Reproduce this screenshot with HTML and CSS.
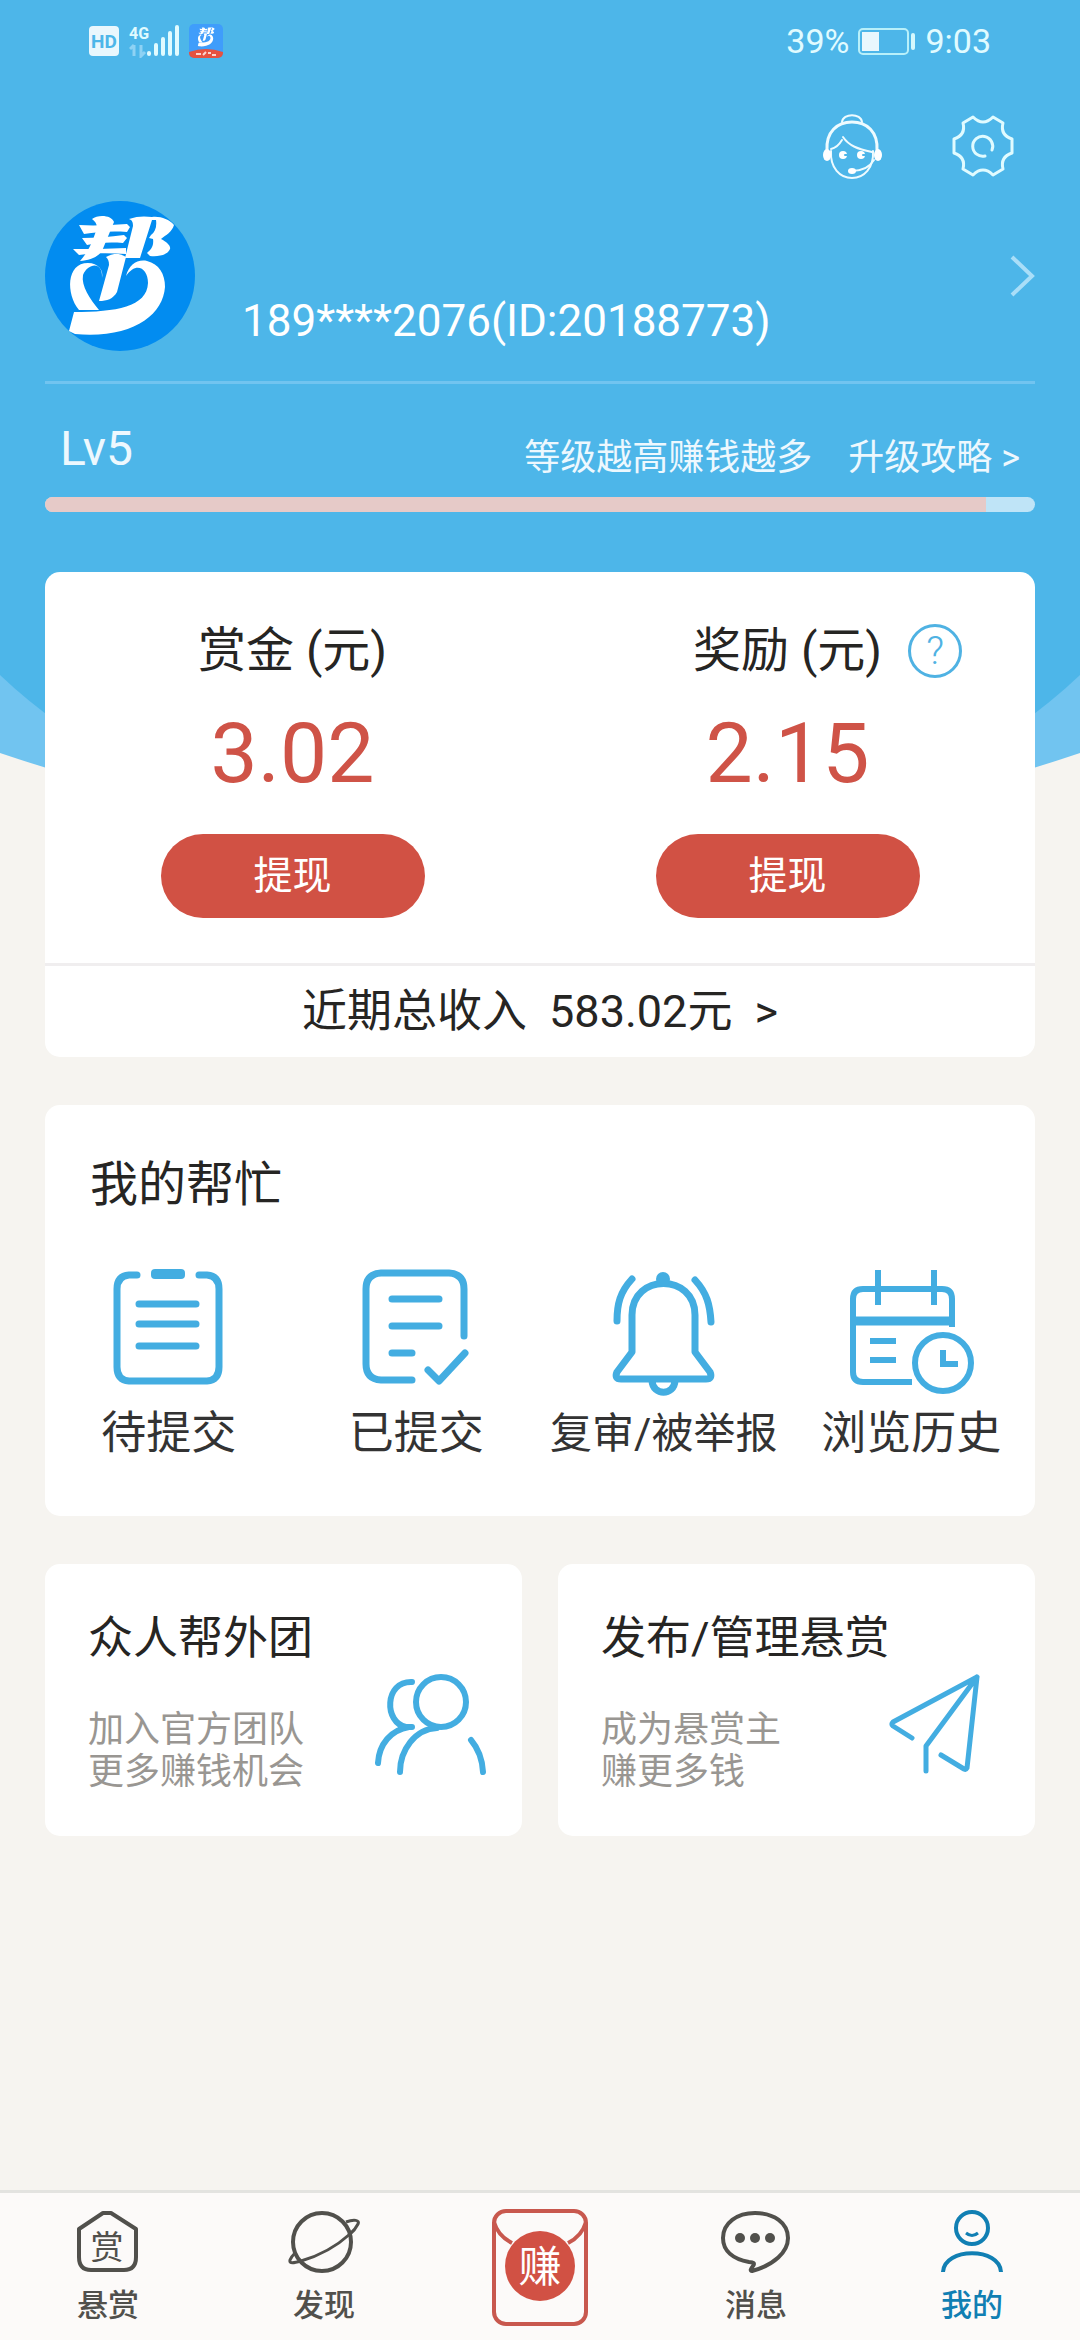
FILE: index.html
```html
<!DOCTYPE html>
<html lang="zh-CN">
<head>
<meta charset="utf-8">
<meta name="viewport" content="width=device-width, initial-scale=1">
<title>我的</title>
<link rel="stylesheet" href="styles.css">
</head>
<body>
<svg class="defs" aria-hidden="true">
  <symbol id="brand-mark" viewBox="0 0 150 150">
    <path d="M34 24c16 1 32 0 48-1l3 3-3 5c-16-1-30 0-43 2zM37 37c14 0 28-1 42-3l3 3-4 5c-15-1-26 0-36 2zM28 48c17 0 35 0 53-1v6c-17-1-33-1-47 1z"/>
    <path d="M47 18c6-5 20-4 22 3L57 50c-5 7-13 9-22 10 8-9 12-18 16-30 2-6 0-9-4-12z"/>
    <path d="M84 18c8-3 16-3 23-2 8-1 17 2 22 8-2 7-8 10-13 14 6 3 10 7 9 10-2 5-9 8-20 7l-3-3c4-3 7-7 6-14l-4-1 2-3c4-3 6-8 5-15h-4L95 57H80l8-32c0-4-1-6-4-7z"/>
    <path d="M61 56c7-4 14-4 20 0L72 91c-4 7-10 9-18 9l10-36c0-4-1-6-3-8z"/>
    <path d="M57 77c1-17-14-15-19-3-2 11 7 24 16 35H34C21 93 21 62 43 62c10 0 16 7 14 15z"/>
    <path d="M81 75c3-11 11-17 21-15 12 3 18 13 18 26-2 29-34 52-90 47l-6-3 5-19c42 0 73-5 74-29 0-15-12-22-22-7z"/>
  </symbol>
</svg>

<div class="page">
  <div class="backdrop" aria-hidden="true">
    <svg viewBox="0 0 1080 840" preserveAspectRatio="none">
      <path fill="#71c4f0" d="M0 0H1080V753Q540 935 0 753Z"/>
      <path fill="#4db6e9" d="M0 0H1080V675C960 790 800 830 540 830S120 790 0 675Z"/>
    </svg>
  </div>

  <header class="status">
    <div class="status-group">
      <svg class="hd" viewBox="0 0 30 30" role="img" aria-label="HD"><rect width="30" height="30" rx="4" fill="#e9f7fd"/><text x="15" y="22" text-anchor="middle" class="hd-text">HD</text></svg>
      <svg class="signal" viewBox="0 0 50 34" role="img" aria-label="4G">
        <text x="0" y="15" class="net-text">4G</text>
        <path d="M5 21v11M1 25l4-4M12 21v11l4-4" stroke="#8ed2f4" stroke-width="3" fill="none"/>
        <path d="M20 29v1M27 21v9M34 15v15M41 9v21M48 3v27" stroke="#e0fbff" stroke-width="4" stroke-linecap="round"/>
      </svg>
      <svg class="app" viewBox="0 0 34 34" aria-hidden="true">
        <rect width="34" height="34" rx="5" fill="#3f9dfb"/>
        <use href="#brand-mark" x="5" y="1" width="24" height="24" fill="#fff"/>
        <path d="M0 28q17-6 34 0v1a5 5 0 0 1-5 5H5a5 5 0 0 1-5-5z" fill="#e65240"/>
        <path d="M7 30h5M14 31l3-3M19 29h3M23 31h4" stroke="#fbd5cf" stroke-width="2"/>
      </svg>
    </div>
    <div class="status-group status-right">
      <span>39%</span>
      <svg class="battery" viewBox="0 0 58 27" role="img" aria-label="电量"><rect x="1" y="1" width="49" height="25" rx="4" fill="none" stroke="#b8f0fa" stroke-width="2"/><rect x="4" y="4" width="17" height="19" fill="#e9f7fd"/><rect x="53" y="5" width="4" height="17" rx="2" fill="#d5f8fd"/></svg>
      <span>9:03</span>
    </div>
  </header>

  <div class="actions">
    <button type="button" aria-label="客服">
      <svg class="agent" viewBox="0 0 60 66" fill="none" stroke="#eefbff" stroke-width="2" stroke-linecap="round">
        <path d="M20 9C21 0 39 0 40 9"/>
        <path d="M5 37C4 19 15 9 30 9s26 10 25 28" stroke-width="3"/>
        <path d="M9 38C8 55 18 65 30 65s22-10 21-27"/>
        <path d="M9 36c5-1 8-4 11-9M21 24c6 9 15 12 29 15M30 58c10 0 17-3 22-11"/>
        <g fill="#fff" stroke="none"><ellipse cx="5" cy="42" rx="4" ry="6"/><ellipse cx="56" cy="42" rx="4" ry="6"/><circle cx="21" cy="42" r="4"/><circle cx="39" cy="42" r="4"/><ellipse cx="30" cy="58" rx="4" ry="3"/></g>
        <path d="M23 42h3M41 42h3" stroke="#4db6e9"/>
      </svg>
    </button>
    <button type="button" aria-label="设置">
      <svg class="gear" viewBox="0 0 66 66" fill="none" stroke="#e0fbff" stroke-width="3" stroke-linejoin="round" stroke-linecap="round">
        <path d="M23 4Q33 14 43 4L53 10Q50 22 62 26V40Q50 44 53 56L43 62Q33 52 23 62L13 56Q16 44 4 40V26Q16 22 13 10Z"/>
        <path d="M42 37A10 10 0 1 0 35 43"/>
      </svg>
    </button>
  </div>

  <a class="profile" href="#profile">
    <svg class="avatar" viewBox="0 0 150 150" role="img" aria-label="头像"><circle cx="75" cy="75" r="75" fill="#028cf0"/><use href="#brand-mark" width="150" height="150" fill="#fff"/></svg>
    <span class="account">189****2076(ID:20188773)</span>
    <svg class="chevron" viewBox="0 0 26 42" fill="none" stroke="#a9def8" stroke-width="4"><path d="M3 2l20 19L3 40"/></svg>
  </a>

  <section class="level">
    <div class="level-row">
      <span class="level-name">Lv5</span>
      <span class="level-note">等级越高赚钱越多</span>
      <a class="level-link" href="#upgrade">升级攻略 &gt;</a>
    </div>
    <div class="meter" role="progressbar" aria-label="等级进度" aria-valuenow="95" aria-valuemin="0" aria-valuemax="100"><div class="meter-fill" style="width:95%"></div></div>
  </section>

  <main>
    <section class="card earnings">
      <div class="balances">
        <div class="balance">
          <div class="balance-label"><span class="balance-name">赏金 (元)</span></div>
          <div class="amount">3.02</div>
          <button type="button" class="withdraw">提现</button>
        </div>
        <div class="balance">
          <div class="balance-label"><span class="balance-name">奖励 (元)</span>
            <button type="button" class="help" aria-label="说明">?</button></div>
          <div class="amount">2.15</div>
          <button type="button" class="withdraw">提现</button>
        </div>
      </div>
      <a class="total" href="#income"><span>近期总收入</span><span>583.02元</span><span>&gt;</span></a>
    </section>

    <section class="card tasks">
      <h2>我的帮忙</h2>
      <div class="task-grid">
        <a href="#pending">
          <svg viewBox="0 0 138 138"><path d="M37 9H29Q17 10 17 23V101Q17 114 29 115H107Q119 114 119 101V23Q119 10 107 9H99"/><path d="M39 38H96M39 58H96M39 80H96"/><rect x="51" y="3" width="34" height="10" rx="4" fill="#43ade1" stroke="none"/></svg>
          <span>待提交</span></a>
        <a href="#submitted">
          <svg viewBox="0 0 138 138"><path d="M65 114H34Q19 113 19 98V23Q19 8 34 7H102Q117 8 117 23V70M45 33H92M45 60H92M45 87H65M81 104L92 115L118 87"/></svg>
          <span>已提交</span></a>
        <a href="#review">
          <svg viewBox="0 0 138 138"><path d="M37 49C37 7 100 7 100 49V86L115 106Q118 113 111 113H26Q19 113 22 106L37 86ZM57 115C58 130 79 130 80 115M37 13C25 26 22 38 22 55M100 14C112 27 115 39 116 56"/><circle cx="68" cy="13" r="7" fill="#43ade1" stroke="none"/></svg>
          <span class="compact">复审/被举报</span></a>
        <a href="#history">
          <svg viewBox="0 0 138 138" class="square"><path d="M70 116H21Q11 116 11 106V33Q11 23 21 23H100Q110 23 110 33V61M36 4V39M92 4V39M28 75H54M28 94H54M101 84V98H116"/><path d="M11 55H110" stroke-width="9"/><circle cx="101" cy="97" r="28"/></svg>
          <span>浏览历史</span></a>
      </div>
    </section>

    <div class="pair">
      <a class="card promo" href="#team">
        <h2>众人帮外团</h2>
        <div class="promo-body">
          <p>加入官方团队<br>更多赚钱机会</p>
          <svg viewBox="0 0 114 114"><circle cx="68" cy="33" r="25"/><path d="M39 13C11 12 11 54 33 58H39H36C18 61 6 75 5 94M64 59C42 60 27 81 27 103M98 71Q109 84 110 103"/></svg>
        </div>
      </a>
      <a class="card promo" href="#publish">
        <h2>发布/管理悬赏</h2>
        <div class="promo-body">
          <p>成为悬赏主<br>赚更多钱</p>
          <svg viewBox="0 0 114 114" class="thin"><path d="M26 69L7 57Q5 55 7 53L91 8L81 99Q80 101 78 100L55 86M91 8L40 77V102"/></svg>
        </div>
      </a>
    </div>
  </main>

  <nav class="tabs">
    <a href="#bounty">
      <svg viewBox="0 0 72 66"><path d="M31 5H39L64 21V49Q64 62 52 62H19Q7 62 7 49V21Z" stroke-width="4"/><text x="35" y="51" text-anchor="middle" class="house-text">赏</text></svg>
      <span>悬赏</span></a>
    <a href="#discover">
      <svg viewBox="0 0 72 66"><circle cx="34" cy="34" r="29" stroke-width="4"/><path d="M58 14C66 11 72 12 70 16Q67 22 62 26Q41 45 13 53C6 55 1 56 2 52Q3 49 7 45" stroke-width="3"/></svg>
      <span>发现</span></a>
    <a href="#earn" class="earn" aria-label="赚">
      <svg viewBox="0 0 102 120"><rect x="5" y="3" width="92" height="113" rx="12" stroke-width="4"/><path d="M5 14Q9 28 23 35M97 14Q93 28 79 35" stroke-width="4"/><circle cx="51" cy="58" r="35" fill="#d15144" stroke="none"/><text x="51" y="74" text-anchor="middle" class="earn-text">赚</text></svg></a>
    <a href="#messages">
      <svg viewBox="0 0 72 66"><path d="M35 5C54 5 68 15 68 30C68 44 54 57 32 63Q29 63 33 58Q36 54 29 54C13 51 3 43 3 30C3 15 17 5 35 5Z" stroke-width="4"/><g fill="currentColor" stroke="none"><circle cx="20" cy="30" r="5"/><circle cx="35" cy="30" r="5"/><circle cx="50" cy="30" r="5"/></g></svg>
      <span>消息</span></a>
    <a href="#me" class="active" aria-current="page">
      <svg viewBox="0 0 72 66"><circle cx="36" cy="20" r="16" stroke-width="4"/><path d="M30 25Q36 30 42 25" stroke-width="3"/><path d="M7 64C8 39 64 39 65 64" stroke-width="4"/></svg>
      <span>我的</span></a>
  </nav>
</div>
</body>
</html>
```

FILE: styles.css
```css
* { box-sizing: border-box; }
body, h2, p { margin: 0; }
body {
  background: #f6f4f0;
  color: #262523;
  font-family: Roboto, "Noto Sans CJK SC", sans-serif;
  font-size: 45px;
  line-height: 60px;
}
a { color: inherit; text-decoration: none; }
h2 { font-size: 45px; font-weight: 400; }
button {
  border: 0;
  padding: 0;
  background: none;
  color: inherit;
  font: inherit;
  cursor: pointer;
}
svg { display: block; flex: none; }
.defs { position: absolute; width: 0; height: 0; }

.page {
  position: relative;
  display: flex;
  flex-direction: column;
  min-height: 100vh;
}
.backdrop {
  position: absolute;
  inset: 0 0 auto;
  z-index: -1;
}
.backdrop svg { width: 100%; height: 840px; }

.status {
  display: flex;
  justify-content: space-between;
  align-items: center;
  height: 82px;
  padding: 0 89px;
}
.status-group { display: flex; align-items: center; gap: 10px; }
.status-right { gap: 9px; color: #e0fbff; font-size: 34px; }
.hd { width: 30px; height: 30px; }
.hd-text { font: 700 19px Roboto, sans-serif; fill: #4db6e9; }
.signal { width: 50px; height: 34px; }
.net-text { font: 700 16px Roboto, sans-serif; fill: #e0fbff; }
.app { width: 34px; height: 34px; }
.battery { width: 58px; height: 27px; }

.actions {
  display: flex;
  justify-content: flex-end;
  gap: 68px;
  padding: 31px 64px 22px;
}
.agent { width: 60px; height: 66px; }
.gear { width: 66px; height: 66px; }

.profile {
  display: flex;
  align-items: center;
  margin: 0 45px;
  padding-bottom: 30px;
  border-bottom: 3px solid #71c4f0;
  color: #fff;
}
.avatar { width: 150px; height: 150px; }
.account { flex: 1; align-self: flex-end; padding-left: 47px; font-size: 44px; }
.chevron { width: 26px; height: 42px; }

.level { margin: 0 45px; color: #edf8fe; }
.level-row {
  display: flex;
  align-items: flex-end;
  padding: 35px 15px 9px;
}
.level-name { flex: 1; padding-bottom: 9px; font-size: 48px; }
.level-note, .level-link { font-size: 36px; }
.level-link { margin-left: 36px; }
.meter {
  height: 15px;
  border-radius: 8px;
  background: #bfe4f7;
  overflow: hidden;
}
.meter-fill { height: 100%; background: #e6cac8; }

main {
  display: flex;
  flex-direction: column;
  gap: 48px;
  flex: 1;
  padding: 60px 45px 48px;
}
.card { border-radius: 15px; background: #fff; }

.balances {
  display: grid;
  grid-template-columns: 1fr 1fr;
  padding: 49px 0 45px;
  border-bottom: 3px solid #f0eeef;
}
.balance { display: flex; flex-direction: column; align-items: center; }
.balance-label {
  display: grid;
  grid-template-columns: 1fr auto 1fr;
  align-items: center;
  align-self: stretch;
}
.balance-name { grid-column: 2; font-size: 48px; }
.help {
  width: 54px;
  height: 54px;
  margin-left: 26px;
  border: 3px solid #4fb2e3;
  border-radius: 50%;
  color: #4fb2e3;
  font-size: 39px;
  font-weight: 300;
  line-height: 48px;
}
.amount {
  margin-top: 25px;
  color: #cf5347;
  font-size: 84px;
  line-height: 96px;
}
.withdraw {
  width: 264px;
  height: 84px;
  margin-top: 32px;
  border-radius: 42px;
  background: #d15144;
  color: #fff;
  font-size: 39px;
}
.total {
  display: flex;
  justify-content: center;
  align-items: center;
  gap: 22px;
  height: 91px;
}

.tasks { padding: 50px 0 52px; }
.tasks h2 { padding: 0 45px; font-size: 48px; }
.task-grid {
  display: grid;
  grid-template-columns: repeat(4, 1fr);
  padding-top: 51px;
}
.task-grid a {
  display: flex;
  flex-direction: column;
  align-items: center;
  color: #333;
  white-space: nowrap;
}
.task-grid svg {
  width: 138px;
  height: 138px;
  fill: none;
  stroke: #43ade1;
  stroke-width: 7;
  stroke-linecap: round;
  stroke-linejoin: round;
}
.task-grid .square { stroke-width: 6; stroke-linecap: butt; stroke-linejoin: miter; }
.compact { font-size: 42px; }

.pair { display: grid; grid-template-columns: 1fr 1fr; gap: 36px; }
.promo { padding: 45px 35px 43px 43px; }
.promo-body {
  display: flex;
  justify-content: space-between;
  height: 124px;
}
.promo p {
  align-self: flex-end;
  color: #999692;
  font-size: 36px;
  line-height: 42px;
}
.promo svg {
  width: 114px;
  height: 114px;
  fill: none;
  stroke: #43ade1;
  stroke-width: 6;
  stroke-linecap: round;
  stroke-linejoin: round;
}
.promo .thin { stroke-width: 5; }

.tabs {
  position: sticky;
  bottom: 0;
  display: grid;
  grid-template-columns: repeat(5, 1fr);
  height: 150px;
  padding-top: 15px;
  border-top: 3px solid #e3e3e0;
  background: #fcfaf9;
  color: #51504c;
  font-size: 31px;
  font-weight: 500;
  line-height: 36px;
}
.tabs a { display: flex; flex-direction: column; align-items: center; gap: 14px; }
.tabs svg { width: 72px; height: 66px; fill: none; stroke: currentColor; stroke-linejoin: round; }
.tabs text { stroke: none; font-family: "Noto Sans CJK SC", sans-serif; font-weight: 400; }
.house-text { font-size: 33px; fill: currentColor; }
.tabs .earn { color: #c8584e; }
.tabs .earn svg { width: 102px; height: 120px; }
.earn-text { font-size: 43px; fill: #fff; }
.tabs .active { color: #117fb3; }
```
